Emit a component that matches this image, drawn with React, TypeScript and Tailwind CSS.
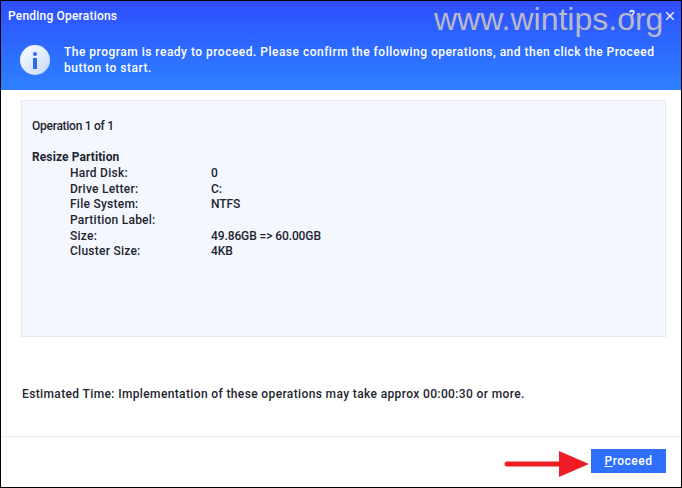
import { X } from "lucide-react";

const details = [
  ["Hard Disk:", "0"],
  ["Drive Letter:", "C:"],
  ["File System:", "NTFS"],
  ["Partition Label:", ""],
  ["Size:", "49.86GB => 60.00GB"],
  ["Cluster Size:", "4KB"],
];

export default function App() {
  return (
    <div className="relative flex h-[488px] w-[682px] flex-col overflow-hidden border border-black bg-white font-['Roboto',sans-serif] text-[12px] font-medium text-[#1d2530]">
      {/* Header */}
      <div className="h-[89px] shrink-0 bg-gradient-to-b from-[#2f4dff] to-[#2e80ff] text-white">
        <div className="pl-[7px] pt-[6px] text-[12px] leading-[18px] tracking-[0.2px]">Pending Operations</div>
        <div className="mt-[19px] flex items-start pl-[19px]">
          <div className="mt-[1px] flex h-[30px] w-[30px] shrink-0 flex-col items-center justify-center gap-[2px] rounded-full bg-gradient-to-br from-white to-[#c4d8fa]">
            <div className="h-[4px] w-[4px] rounded-full bg-[#2f6bf0]" />
            <div className="h-[11px] w-[4px] bg-[#2f6bf0]" />
          </div>
          <div className="ml-[14px] w-[600px] text-[12px] leading-[16px] tracking-[0.49px]">
            The program is ready to proceed. Please confirm the following operations, and then click the Proceed button to start.
          </div>
        </div>
      </div>

      {/* Operation details */}
      <div className="ml-[20px] mr-[15px] mt-[10px] h-[237px] shrink-0 border border-[#e3e8f2] bg-[#f4f7fe] pl-[10px] pt-[17px] leading-[16px]">
        <div className="tracking-[-0.27px]">Operation 1 of 1</div>
        <div className="mt-[15px] font-bold tracking-[0.1px]">Resize Partition</div>
        <div className="pl-[38px]">
          {details.map(([label, value]) => (
            <div key={label} className="flex h-[15.7px]">
              <div className="w-[141px] tracking-[0.25px]">{label}</div>
              <div className="tracking-[-0.1px]">{value}</div>
            </div>
          ))}
        </div>
      </div>

      <div className="ml-[21px] mt-[49px] leading-[16px] tracking-[0.37px]">
        Estimated Time: Implementation of these operations may take approx 00:00:30 or more.
      </div>

      {/* Footer */}
      <div className="mt-[34px] flex flex-1 justify-end border-t border-[#e6ebf5] pr-[15px] pt-[12px]">
        <button className="h-[24px] w-[75px] bg-[#2e6ffb] text-[12px] tracking-[0.5px] text-white">
          <span className="underline">P</span>roceed
        </button>
      </div>

      {/* Help and close buttons */}
      <div className="absolute left-[628px] top-[6px] text-[12px] leading-[16px] text-white">?</div>
      <X className="absolute right-[4px] top-[8px] h-[14px] w-[14px] text-white" strokeWidth={2} />

      {/* Watermark */}
      <div className="absolute left-[433px] top-[0px] font-['Liberation_Sans',sans-serif] text-[32px] font-normal leading-[36px] text-[#b9b9c9]">
        www.wintips.org
      </div>

      {/* Red arrow */}
      <svg className="absolute left-[503px] top-[450px]" width="86" height="28" viewBox="0 0 86 28">
        <line x1="3" y1="13" x2="56" y2="13" stroke="#ed1c24" strokeWidth="5" strokeLinecap="round" />
        <polygon points="55,0 85,13 55,26" fill="#ed1c24" />
      </svg>
    </div>
  );
}
